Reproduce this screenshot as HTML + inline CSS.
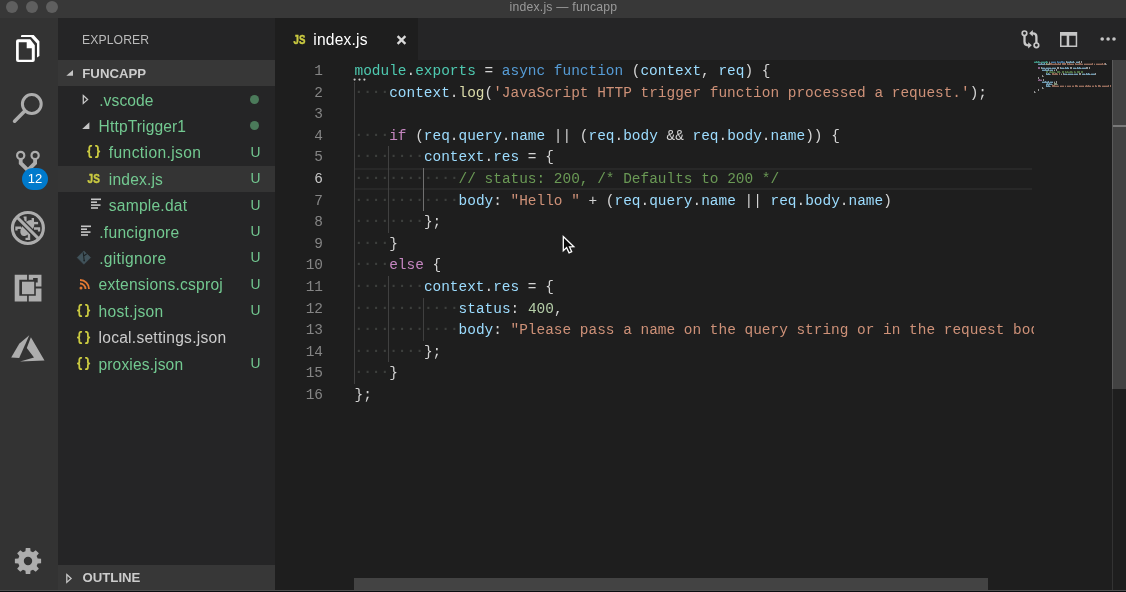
<!DOCTYPE html>
<html><head><meta charset="utf-8">
<style>
*{margin:0;padding:0;box-sizing:border-box}
html,body{width:1126px;height:592px;overflow:hidden;background:#1e1e1e;font-family:"Liberation Sans",sans-serif;-webkit-font-smoothing:antialiased}
.abs{position:absolute}
#title{position:absolute;left:0;top:0;width:1126px;height:18px;background:#383838}
.tl{position:absolute;top:1px;width:12px;height:12px;border-radius:50%;background:#5f5f5f}
#ttext{position:absolute;left:509.5px;top:0px;font-size:12.2px;letter-spacing:0.23px;color:#9a9a9a;white-space:nowrap}
#act{position:absolute;left:0;top:18px;width:58px;height:572px;background:#333333}
#side{position:absolute;left:58px;top:18px;width:217px;height:572px;background:#252526}
.row{position:absolute;left:58px;width:217px;height:26.4px;line-height:26.4px;font-size:15.6px;color:#73c991;white-space:nowrap}
.row .nm{position:absolute;top:0}
.row .dot{position:absolute;left:191.7px;top:7px;width:9.4px;height:9.4px;border-radius:50%;background:#4b7a5a}
.ic{font-family:"Liberation Sans",sans-serif;font-size:14px;font-weight:bold;color:#cbcb41;letter-spacing:-0.5px;line-height:14px}
.jsic{font-family:"Liberation Sans",sans-serif;font-size:11.5px;font-weight:bold;color:#cbcb41;line-height:11px;letter-spacing:0}
.row .u{position:absolute;left:192.4px;top:-0.5px;font-size:13.8px}
#tabs{position:absolute;left:275px;top:18px;width:851px;height:42px;background:#252526}
#tab{position:absolute;left:275px;top:18px;width:143px;height:42px;background:#1e1e1e}
.ln{position:absolute;left:354.5px;width:679px;overflow:hidden;height:21.6px;line-height:21.6px;font-family:"Liberation Mono",monospace;font-size:14.44px;white-space:pre;color:#d4d4d4}
.ln i{font-style:normal;color:#3d3f3d;position:relative;top:-1px;font-weight:bold}
.num{position:absolute;left:290px;width:33px;text-align:right;height:21.6px;line-height:21.6px;font-family:"Liberation Mono",monospace;font-size:14.44px;color:#858585}
.num.act{color:#c6c6c6}
.ig{position:absolute;width:1px;background:#404040}
.iga{background:#707070}
</style></head><body>
<div style="position:absolute;left:0;top:0;width:1126px;height:592px;will-change:transform">
<div id="title">
  <div class="tl" style="left:6px"></div>
  <div class="tl" style="left:26px"></div>
  <div class="tl" style="left:46px"></div>
  <div id="ttext">index.js — funcapp</div>
</div>
<div id="act"></div>
<svg class="abs" style="left:0;top:18px" width="58" height="572" viewBox="0 18 58 572">
 <!-- explorer (white) -->
 <path fill="#ffffff" fill-rule="evenodd" d="M18.1,39.3 H30.2 L34.8,45.2 V60 Q34.8,62 32.8,62 H18.1 Q16.05,62 16.05,60 V41.3 Q16.05,39.3 18.1,39.3 Z M18.75,42.3 V59.8 H31.8 V48.2 H26.7 V42.3 Z"/>
 <path fill="#ffffff" d="M22,35 H33.7 L39.4,41.2 V55.9 L37,57.6 V43.6 L31,37.1 H21 V36 Q21,35 22,35 Z"/>
 <!-- search -->
 <g fill="none" stroke="#adadad">
  <circle cx="31.8" cy="104" r="9.4" stroke-width="3"/>
  <path d="M24.5,111.3 L14.6,121.2" stroke-width="3.6" stroke-linecap="round"/>
 </g>
 <!-- source control -->
 <g fill="none" stroke="#adadad" stroke-width="2.2">
  <circle cx="20.7" cy="155.4" r="3.6"/>
  <circle cx="35.1" cy="155.4" r="3.6"/>
 </g>
 <path d="M18.8,158.6 V163.9 L27.9,173 L37,163.9 V158.6 H33.2 V162.3 L27.9,167.6 L22.6,162.3 V158.6 Z" fill="#adadad"/>
 <!-- debug -->
 <g fill="#adadad">
  <ellipse cx="27.3" cy="228" rx="9.2" ry="5.3" transform="rotate(-52 27.3 228)"/>
  <path d="M23.6,216.4 H26.6 V221.8 H24.2 V218.3 H23.6 Z"/>
  <rect x="31.6" y="218" width="2.4" height="4.6"/>
  <rect x="33.5" y="221.9" width="4.6" height="2.4"/>
  <path d="M34,227.3 H40.2 V231.6 H37.9 V229.7 H34 Z"/>
  <path d="M15.3,226.5 H21 V228.9 H17.6 V230.4 H15.3 Z"/>
  <path d="M27.8,233.5 H30.2 V239.9 H25.5 V237.7 H27.8 Z"/>
 </g>
 <path d="M15.5,215.6 L40.3,240.4" stroke="#333333" stroke-width="5.6"/>
 <g fill="none" stroke="#adadad">
  <circle cx="27.9" cy="228" r="15.5" stroke-width="3.1"/>
  <path d="M17,217.1 L38.8,238.9" stroke-width="2.9"/>
 </g>
 <!-- extensions -->
 <g fill="#adadad">
  <path d="M14.7,274.7 H27.1 V279.8 H19.3 V295.8 H27.1 V301.46 H14.7 Z"/>
  <path d="M28.75,274.7 H41.46 V286.6 H35.8 V282.5 H37.7 V278 H33.1 V279.8 H28.75 Z"/>
  <path d="M28.75,301.46 H41.46 V288.5 H35.8 V295.8 H28.75 Z"/>
  <rect x="22" y="281.7" width="12.2" height="12.5"/>
 </g>
 <!-- azure -->
 <g fill="#adadad">
  <polygon points="11.2,357.6 19.2,343.7 29.3,335.2 19.2,358.05"/>
  <polygon points="30.9,337.2 44.5,360.6 20.05,361.4 34,357.6 26.8,347.9"/>
 </g>
 <!-- gear -->
 <g transform="translate(28,561)" fill="#adadad">
  <path id="gear" fill-rule="evenodd" d="M9.66,-2.57 L13.11,-2.25 L13.11,2.25 L9.66,2.57 L8.65,5.02 L10.86,7.68 L7.68,10.86 L5.02,8.65 L2.57,9.66 L2.25,13.11 L-2.25,13.11 L-2.57,9.66 L-5.02,8.65 L-7.68,10.86 L-10.86,7.68 L-8.65,5.02 L-9.66,2.57 L-13.11,2.25 L-13.11,-2.25 L-9.66,-2.57 L-8.65,-5.02 L-10.86,-7.68 L-7.68,-10.86 L-5.02,-8.65 L-2.57,-9.66 L-2.25,-13.11 L2.25,-13.11 L2.57,-9.66 L5.02,-8.65 L7.68,-10.86 L10.86,-7.68 L8.65,-5.02 Z M4.2,0 A4.2,4.2 0 1 0 -4.2,0 A4.2,4.2 0 1 0 4.2,0 Z"/>
 </g>
</svg>
<div class="abs" style="left:22px;top:168px;width:26px;height:21.6px;border-radius:11px;background:#007acc;color:#fff;font-size:13px;line-height:21.6px;text-align:center">12</div>
<div id="side"></div>
<div class="abs" style="left:82px;top:32.5px;font-size:12.2px;color:#bbbbbb;letter-spacing:0.1px">EXPLORER</div>
<div class="abs" style="left:58px;top:60px;width:217px;height:26px;background:#373737"></div>
<div class="abs" style="left:82.3px;top:66px;font-size:13.2px;font-weight:bold;color:#cccccc">FUNCAPP</div>
<div class="abs" style="left:58px;top:165.6px;width:217px;height:26.4px;background:#343434"></div>
<div class="row" style="top:87.50px"><span class="nm" style="left:41.2px;letter-spacing:0.092px">.vscode</span><span class="dot"></span></div>
<div class="row" style="top:113.90px"><span class="nm" style="left:40.6px;letter-spacing:0.119px">HttpTrigger1</span><span class="dot"></span></div>
<div class="row" style="top:140.30px"><span class="nm" style="left:50.8px;letter-spacing:0.386px">function.json</span><span class="u">U</span></div>
<div class="row" style="top:166.70px"><span class="nm" style="left:50.8px;letter-spacing:0.175px">index.js</span><span class="u">U</span></div>
<div class="row" style="top:193.10px"><span class="nm" style="left:50.8px;letter-spacing:0.213px">sample.dat</span><span class="u">U</span></div>
<div class="row" style="top:219.50px"><span class="nm" style="left:41.2px;letter-spacing:0.294px">.funcignore</span><span class="u">U</span></div>
<div class="row" style="top:245.90px"><span class="nm" style="left:41.2px;letter-spacing:0.316px">.gitignore</span><span class="u">U</span></div>
<div class="row" style="top:272.30px"><span class="nm" style="left:40.5px;letter-spacing:0.238px">extensions.csproj</span><span class="u">U</span></div>
<div class="row" style="top:298.70px"><span class="nm" style="left:40.5px;letter-spacing:0.285px">host.json</span><span class="u">U</span></div>
<div class="row" style="top:325.10px;color:#cccccc"><span class="nm" style="left:40.5px;letter-spacing:0.250px">local.settings.json</span></div>
<div class="row" style="top:351.50px"><span class="nm" style="left:40.5px;letter-spacing:0.126px">proxies.json</span><span class="u">U</span></div>
<!-- file icons -->
<svg class="abs" style="left:87px;top:145px" width="14" height="14" viewBox="0 0 14 14"><g fill="none" stroke="#cbcb41" stroke-width="1.8" stroke-linecap="round" stroke-linejoin="round"><path d="M4.3,0.8 Q2.3,0.8 2.3,2.8 V5 Q2.3,6.5 0.9,6.5 Q2.3,6.5 2.3,8 V10.2 Q2.3,12.2 4.3,12.2"/><path d="M8.9,0.8 Q10.9,0.8 10.9,2.8 V5 Q10.9,6.5 12.3,6.5 Q10.9,6.5 10.9,8 V10.2 Q10.9,12.2 8.9,12.2"/></g></svg>
<svg class="abs" style="left:87px;top:172px" width="15" height="12"><text x="0.6" y="10.9" font-family="Liberation Sans" font-weight="bold" font-size="12.5" fill="#cbcb41" stroke="#cbcb41" stroke-width="0.45" textLength="12.2" lengthAdjust="spacingAndGlyphs">JS</text></svg>
<svg class="abs" style="left:91px;top:198px" width="11" height="12"><g fill="#c5c5c5"><rect x="0" y="0.5" width="10" height="1.6"/><rect x="0" y="3.4" width="6" height="1.6"/><rect x="0" y="6.3" width="9.5" height="1.6"/><rect x="0" y="9.2" width="7" height="1.6"/></g></svg>
<svg class="abs" style="left:81px;top:224.5px" width="11" height="12"><g fill="#c5c5c5"><rect x="0" y="0.5" width="10" height="1.6"/><rect x="0" y="3.4" width="6" height="1.6"/><rect x="0" y="6.3" width="9.5" height="1.6"/><rect x="0" y="9.2" width="7" height="1.6"/></g></svg>
<svg class="abs" style="left:76px;top:250px" width="16" height="16" viewBox="76 250 16 16"><polygon points="83.9,250.9 90.6,257.6 83.9,264.3 77.2,257.6" fill="#41535b" stroke="#41535b" stroke-width="0.6" stroke-linejoin="round"/><path d="M83.2,252.4 L84.2,260.5 M83.7,256 L86.8,253.8" stroke="#1e2426" stroke-width="1.1" fill="none"/><circle cx="84.2" cy="260.6" r="0.9" fill="#1e2426"/></svg>
<svg class="abs" style="left:78.5px;top:277.5px" width="12" height="12"><g fill="none" stroke="#e37933" stroke-width="1.8"><path d="M1,2 A9,9 0 0 1 10,11"/><path d="M1,5.5 A5.5,5.5 0 0 1 6.5,11"/></g><circle cx="2" cy="10" r="1.5" fill="#e37933"/></svg>
<svg class="abs" style="left:77.4px;top:304.2px" width="14" height="14" viewBox="0 0 14 14"><g fill="none" stroke="#cbcb41" stroke-width="1.8" stroke-linecap="round" stroke-linejoin="round"><path d="M4.3,0.8 Q2.3,0.8 2.3,2.8 V5 Q2.3,6.5 0.9,6.5 Q2.3,6.5 2.3,8 V10.2 Q2.3,12.2 4.3,12.2"/><path d="M8.9,0.8 Q10.9,0.8 10.9,2.8 V5 Q10.9,6.5 12.3,6.5 Q10.9,6.5 10.9,8 V10.2 Q10.9,12.2 8.9,12.2"/></g></svg>
<svg class="abs" style="left:77.4px;top:330.6px" width="14" height="14" viewBox="0 0 14 14"><g fill="none" stroke="#cbcb41" stroke-width="1.8" stroke-linecap="round" stroke-linejoin="round"><path d="M4.3,0.8 Q2.3,0.8 2.3,2.8 V5 Q2.3,6.5 0.9,6.5 Q2.3,6.5 2.3,8 V10.2 Q2.3,12.2 4.3,12.2"/><path d="M8.9,0.8 Q10.9,0.8 10.9,2.8 V5 Q10.9,6.5 12.3,6.5 Q10.9,6.5 10.9,8 V10.2 Q10.9,12.2 8.9,12.2"/></g></svg>
<svg class="abs" style="left:77.4px;top:357px" width="14" height="14" viewBox="0 0 14 14"><g fill="none" stroke="#cbcb41" stroke-width="1.8" stroke-linecap="round" stroke-linejoin="round"><path d="M4.3,0.8 Q2.3,0.8 2.3,2.8 V5 Q2.3,6.5 0.9,6.5 Q2.3,6.5 2.3,8 V10.2 Q2.3,12.2 4.3,12.2"/><path d="M8.9,0.8 Q10.9,0.8 10.9,2.8 V5 Q10.9,6.5 12.3,6.5 Q10.9,6.5 10.9,8 V10.2 Q10.9,12.2 8.9,12.2"/></g></svg>
<div class="abs" style="left:58px;top:565px;width:217px;height:25px;background:#373737"></div>
<svg class="abs" style="left:0;top:0" width="275" height="592">
 <polygon points="66.3,75.8 73,69.9 73,75.8" fill="#c5c5c5"/>
 <polygon points="83.3,95.6 87.6,99.5 83.3,103.4" fill="none" stroke="#c5c5c5" stroke-width="1.3"/>
 <polygon points="82.2,129 89.4,122.3 89.4,129" fill="#c5c5c5"/>
 <polygon points="66.8,574.6 71.1,578.5 66.8,582.4" fill="none" stroke="#c5c5c5" stroke-width="1.3"/>
</svg>
<div class="abs" style="left:82.5px;top:570.2px;font-size:13.2px;font-weight:bold;color:#cccccc">OUTLINE</div>
<div id="tabs"></div>
<div id="tab"></div>
<svg class="abs" style="left:292.5px;top:33px" width="15" height="12"><text x="0.6" y="10.9" font-family="Liberation Sans" font-weight="bold" font-size="12.5" fill="#cbcb41" stroke="#cbcb41" stroke-width="0.45" textLength="11.8" lengthAdjust="spacingAndGlyphs">JS</text></svg>
<div class="abs" style="left:313.3px;top:30.6px;font-size:15.6px;letter-spacing:0.2px;color:#ffffff;line-height:18px">index.js</div>
<svg class="abs" style="left:396px;top:35px" width="11" height="10"><path d="M1.6,1.1 L9.4,8.9 M9.4,1.1 L1.6,8.9" stroke="#dadada" stroke-width="2.3"/></svg>
<svg class="abs" style="left:1010px;top:24px" width="116" height="30" viewBox="1010 24 116 30">
 <g fill="none" stroke="#c8c8c8" stroke-width="1.7">
  <circle cx="1024.5" cy="33.3" r="2.3"/>
  <circle cx="1036.4" cy="45.3" r="2.3"/>
 </g>
 <g fill="none" stroke="#c8c8c8" stroke-width="2.3">
  <path d="M1024.5,35.6 V41.8 Q1024.5,45.3 1028,45.3 H1029.5"/>
  <path d="M1036.4,43 V36.8 Q1036.4,33.3 1032.9,33.3 H1031.5"/>
 </g>
 <g fill="#c8c8c8">
  <polygon points="1028.2,42.2 1031.8,45.3 1028.2,48.5"/>
  <polygon points="1032.8,30.1 1029.2,33.3 1032.8,36.5"/>
 </g>
 <path fill="#c5c5c5" fill-rule="evenodd" d="M1060,32 H1077.2 V46.9 H1060 Z M1061.5,35.8 V45.4 H1066.7 V35.8 Z M1069.2,35.8 V45.4 H1075.7 V35.8 Z"/>
 <g fill="#c5c5c5">
  <circle cx="1102.2" cy="39" r="1.8"/>
  <circle cx="1108.1" cy="39" r="1.8"/>
  <circle cx="1114" cy="39" r="1.8"/>
 </g>
</svg>
<!-- current line highlight -->
<div class="abs" style="left:354px;top:168px;width:678px;height:21.6px;border-top:2px solid #282828;border-bottom:2px solid #282828"></div>
<div class="ig" style="left:354.0px;top:81.60px;height:302.40px"></div>
<div class="ig" style="left:388.0px;top:146.40px;height:86.40px"></div>
<div class="ig iga" style="left:423.0px;top:168.00px;height:43.20px"></div>
<div class="ig" style="left:388.0px;top:276.00px;height:86.40px"></div>
<div class="ig" style="left:423.0px;top:297.60px;height:43.20px"></div>
<svg class="abs" style="left:352px;top:77px" width="16" height="5"><g fill="#c8c8c8"><circle cx="2.6" cy="2.6" r="1.1"/><circle cx="7.5" cy="2.6" r="1.1"/><circle cx="12.4" cy="2.6" r="1.1"/></g></svg>
<div class="ln" style="top:61.00px"><span style="color:#4ec9b0">module</span><span style="color:#d4d4d4">.</span><span style="color:#4ec9b0">exports</span><span style="color:#d4d4d4"> = </span><span style="color:#569cd6">async</span><span style="color:#d4d4d4"> </span><span style="color:#569cd6">function</span><span style="color:#d4d4d4"> (</span><span style="color:#9cdcfe">context</span><span style="color:#d4d4d4">, </span><span style="color:#9cdcfe">req</span><span style="color:#d4d4d4">) {</span></div>
<div class="num" style="top:61.00px">1</div>
<div class="ln" style="top:82.60px"><i>·</i><i>·</i><i>·</i><i>·</i><span style="color:#9cdcfe">context</span><span style="color:#d4d4d4">.</span><span style="color:#dcdcaa">log</span><span style="color:#d4d4d4">(</span><span style="color:#ce9178">&#x27;JavaScript HTTP trigger function processed a request.&#x27;</span><span style="color:#d4d4d4">);</span></div>
<div class="num" style="top:82.60px">2</div>
<div class="ln" style="top:104.20px"></div>
<div class="num" style="top:104.20px">3</div>
<div class="ln" style="top:125.80px"><i>·</i><i>·</i><i>·</i><i>·</i><span style="color:#c586c0">if</span><span style="color:#d4d4d4"> (</span><span style="color:#9cdcfe">req</span><span style="color:#d4d4d4">.</span><span style="color:#9cdcfe">query</span><span style="color:#d4d4d4">.</span><span style="color:#9cdcfe">name</span><span style="color:#d4d4d4"> || (</span><span style="color:#9cdcfe">req</span><span style="color:#d4d4d4">.</span><span style="color:#9cdcfe">body</span><span style="color:#d4d4d4"> &amp;&amp; </span><span style="color:#9cdcfe">req</span><span style="color:#d4d4d4">.</span><span style="color:#9cdcfe">body</span><span style="color:#d4d4d4">.</span><span style="color:#9cdcfe">name</span><span style="color:#d4d4d4">)) {</span></div>
<div class="num" style="top:125.80px">4</div>
<div class="ln" style="top:147.40px"><i>·</i><i>·</i><i>·</i><i>·</i><i>·</i><i>·</i><i>·</i><i>·</i><span style="color:#9cdcfe">context</span><span style="color:#d4d4d4">.</span><span style="color:#9cdcfe">res</span><span style="color:#d4d4d4"> = {</span></div>
<div class="num" style="top:147.40px">5</div>
<div class="ln" style="top:169.00px"><i>·</i><i>·</i><i>·</i><i>·</i><i>·</i><i>·</i><i>·</i><i>·</i><i>·</i><i>·</i><i>·</i><i>·</i><span style="color:#6a9955">// status: 200, /* Defaults to 200 */</span></div>
<div class="num act" style="top:169.00px">6</div>
<div class="ln" style="top:190.60px"><i>·</i><i>·</i><i>·</i><i>·</i><i>·</i><i>·</i><i>·</i><i>·</i><i>·</i><i>·</i><i>·</i><i>·</i><span style="color:#9cdcfe">body</span><span style="color:#d4d4d4">: </span><span style="color:#ce9178">&quot;Hello &quot;</span><span style="color:#d4d4d4"> + (</span><span style="color:#9cdcfe">req</span><span style="color:#d4d4d4">.</span><span style="color:#9cdcfe">query</span><span style="color:#d4d4d4">.</span><span style="color:#9cdcfe">name</span><span style="color:#d4d4d4"> || </span><span style="color:#9cdcfe">req</span><span style="color:#d4d4d4">.</span><span style="color:#9cdcfe">body</span><span style="color:#d4d4d4">.</span><span style="color:#9cdcfe">name</span><span style="color:#d4d4d4">)</span></div>
<div class="num" style="top:190.60px">7</div>
<div class="ln" style="top:212.20px"><i>·</i><i>·</i><i>·</i><i>·</i><i>·</i><i>·</i><i>·</i><i>·</i><span style="color:#d4d4d4">};</span></div>
<div class="num" style="top:212.20px">8</div>
<div class="ln" style="top:233.80px"><i>·</i><i>·</i><i>·</i><i>·</i><span style="color:#d4d4d4">}</span></div>
<div class="num" style="top:233.80px">9</div>
<div class="ln" style="top:255.40px"><i>·</i><i>·</i><i>·</i><i>·</i><span style="color:#c586c0">else</span><span style="color:#d4d4d4"> {</span></div>
<div class="num" style="top:255.40px">10</div>
<div class="ln" style="top:277.00px"><i>·</i><i>·</i><i>·</i><i>·</i><i>·</i><i>·</i><i>·</i><i>·</i><span style="color:#9cdcfe">context</span><span style="color:#d4d4d4">.</span><span style="color:#9cdcfe">res</span><span style="color:#d4d4d4"> = {</span></div>
<div class="num" style="top:277.00px">11</div>
<div class="ln" style="top:298.60px"><i>·</i><i>·</i><i>·</i><i>·</i><i>·</i><i>·</i><i>·</i><i>·</i><i>·</i><i>·</i><i>·</i><i>·</i><span style="color:#9cdcfe">status</span><span style="color:#d4d4d4">: </span><span style="color:#b5cea8">400</span><span style="color:#d4d4d4">,</span></div>
<div class="num" style="top:298.60px">12</div>
<div class="ln" style="top:320.20px"><i>·</i><i>·</i><i>·</i><i>·</i><i>·</i><i>·</i><i>·</i><i>·</i><i>·</i><i>·</i><i>·</i><i>·</i><span style="color:#9cdcfe">body</span><span style="color:#d4d4d4">: </span><span style="color:#ce9178">&quot;Please pass a name on the query string or in the request body&quot;</span></div>
<div class="num" style="top:320.20px">13</div>
<div class="ln" style="top:341.80px"><i>·</i><i>·</i><i>·</i><i>·</i><i>·</i><i>·</i><i>·</i><i>·</i><span style="color:#d4d4d4">};</span></div>
<div class="num" style="top:341.80px">14</div>
<div class="ln" style="top:363.40px"><i>·</i><i>·</i><i>·</i><i>·</i><span style="color:#d4d4d4">}</span></div>
<div class="num" style="top:363.40px">15</div>
<div class="ln" style="top:385.00px"><span style="color:#d4d4d4">};</span></div>
<div class="num" style="top:385.00px">16</div>
<svg class="abs" style="left:0;top:0" width="1126" height="100">
<path fill="#4ec9b0" fill-opacity="0.25" d="M1034,61h1v1h-1zM1035,61h1v1h-1zM1037,61h1v1h-1zM1039,61h1v1h-1zM1041,61h1v1h-1zM1042,61h1v1h-1zM1043,61h1v1h-1zM1044,61h1v1h-1zM1045,61h1v1h-1zM1047,61h1v1h-1z"/>
<path fill="#4ec9b0" fill-opacity="0.65" d="M1034,62h1v1h-1zM1035,62h1v1h-1zM1036,61h1v2h-1zM1037,62h1v1h-1zM1038,61h1v2h-1zM1039,62h1v1h-1zM1041,62h1v1h-1zM1042,62h1v1h-1zM1044,62h1v1h-1zM1045,62h1v1h-1zM1046,61h1v2h-1zM1047,62h1v1h-1z"/>
<path fill="#d4d4d4" fill-opacity="0.4" d="M1040,62h1v1h-1zM1074,62h1v1h-1zM1045,64h1v1h-1zM1106,64h1v1h-1zM1045,68h1v1h-1zM1051,68h1v1h-1zM1064,68h1v1h-1zM1076,68h1v1h-1zM1081,68h1v1h-1zM1049,70h1v1h-1zM1050,74h1v1h-1zM1067,74h1v1h-1zM1073,74h1v1h-1zM1085,74h1v1h-1zM1090,74h1v1h-1zM1043,76h1v1h-1zM1049,82h1v1h-1zM1052,84h1v1h-1zM1057,84h1v1h-1zM1050,86h1v1h-1zM1043,88h1v1h-1zM1035,92h1v1h-1z"/>
<path fill="#4ec9b0" fill-opacity="0.7" d="M1043,62h1v1h-1z"/>
<path fill="#d4d4d4" fill-opacity="0.25" d="M1049,61h1v1h-1zM1054,69h1v1h-1zM1061,73h1v1h-1zM1054,81h1v1h-1z"/>
<path fill="#d4d4d4" fill-opacity="0.65" d="M1049,62h1v1h-1zM1066,61h1v2h-1zM1079,61h1v2h-1zM1081,61h1v2h-1zM1049,63h1v2h-1zM1105,63h1v2h-1zM1041,67h1v2h-1zM1057,67h1v2h-1zM1058,67h1v2h-1zM1060,67h1v2h-1zM1070,67h1v2h-1zM1071,67h1v2h-1zM1086,67h1v2h-1zM1087,67h1v2h-1zM1089,67h1v2h-1zM1054,70h1v1h-1zM1056,69h1v2h-1zM1061,74h1v1h-1zM1063,73h1v2h-1zM1079,73h1v2h-1zM1080,73h1v2h-1zM1095,73h1v2h-1zM1042,75h1v2h-1zM1038,77h1v2h-1zM1043,79h1v2h-1zM1054,82h1v1h-1zM1056,81h1v2h-1zM1042,87h1v2h-1zM1038,89h1v2h-1zM1034,91h1v2h-1z"/>
<path fill="#569cd6" fill-opacity="0.25" d="M1051,61h1v1h-1zM1052,61h1v1h-1zM1053,61h1v1h-1zM1054,61h1v1h-1zM1055,61h1v1h-1zM1058,61h1v1h-1zM1059,61h1v1h-1zM1060,61h1v1h-1zM1063,61h1v1h-1zM1064,61h1v1h-1z"/>
<path fill="#569cd6" fill-opacity="0.65" d="M1051,62h1v1h-1zM1052,62h1v1h-1zM1054,62h1v1h-1zM1055,62h1v1h-1zM1057,61h1v2h-1zM1058,62h1v1h-1zM1059,62h1v1h-1zM1060,62h1v1h-1zM1061,61h1v2h-1zM1062,61h1v2h-1zM1063,62h1v1h-1zM1064,62h1v1h-1z"/>
<path fill="#569cd6" fill-opacity="0.7" d="M1053,62h1v1h-1z"/>
<path fill="#9cdcfe" fill-opacity="0.25" d="M1067,61h1v1h-1zM1068,61h1v1h-1zM1069,61h1v1h-1zM1071,61h1v1h-1zM1072,61h1v1h-1zM1076,61h1v1h-1zM1077,61h1v1h-1zM1078,61h1v1h-1zM1038,63h1v1h-1zM1039,63h1v1h-1zM1040,63h1v1h-1zM1042,63h1v1h-1zM1043,63h1v1h-1zM1042,67h1v1h-1zM1043,67h1v1h-1zM1044,67h1v1h-1zM1046,67h1v1h-1zM1047,67h1v1h-1zM1048,67h1v1h-1zM1049,67h1v1h-1zM1050,67h1v1h-1zM1052,67h1v1h-1zM1053,67h1v1h-1zM1054,67h1v1h-1zM1055,67h1v1h-1zM1061,67h1v1h-1zM1062,67h1v1h-1zM1063,67h1v1h-1zM1066,67h1v1h-1zM1068,67h1v1h-1zM1073,67h1v1h-1zM1074,67h1v1h-1zM1075,67h1v1h-1zM1078,67h1v1h-1zM1080,67h1v1h-1zM1082,67h1v1h-1zM1083,67h1v1h-1zM1084,67h1v1h-1zM1085,67h1v1h-1zM1042,69h1v1h-1zM1043,69h1v1h-1zM1044,69h1v1h-1zM1046,69h1v1h-1zM1047,69h1v1h-1zM1050,69h1v1h-1zM1051,69h1v1h-1zM1052,69h1v1h-1zM1047,73h1v1h-1zM1049,73h1v1h-1zM1064,73h1v1h-1zM1065,73h1v1h-1zM1066,73h1v1h-1zM1068,73h1v1h-1zM1069,73h1v1h-1zM1070,73h1v1h-1zM1071,73h1v1h-1zM1072,73h1v1h-1zM1074,73h1v1h-1zM1075,73h1v1h-1zM1076,73h1v1h-1zM1077,73h1v1h-1zM1082,73h1v1h-1zM1083,73h1v1h-1zM1084,73h1v1h-1zM1087,73h1v1h-1zM1089,73h1v1h-1zM1091,73h1v1h-1zM1092,73h1v1h-1zM1093,73h1v1h-1zM1094,73h1v1h-1zM1042,81h1v1h-1zM1043,81h1v1h-1zM1044,81h1v1h-1zM1046,81h1v1h-1zM1047,81h1v1h-1zM1050,81h1v1h-1zM1051,81h1v1h-1zM1052,81h1v1h-1zM1046,83h1v1h-1zM1048,83h1v1h-1zM1050,83h1v1h-1zM1051,83h1v1h-1zM1047,85h1v1h-1zM1049,85h1v1h-1z"/>
<path fill="#9cdcfe" fill-opacity="0.65" d="M1067,62h1v1h-1zM1068,62h1v1h-1zM1069,62h1v1h-1zM1070,61h1v2h-1zM1071,62h1v1h-1zM1072,62h1v1h-1zM1073,61h1v2h-1zM1076,62h1v1h-1zM1077,62h1v1h-1zM1038,64h1v1h-1zM1039,64h1v1h-1zM1040,64h1v1h-1zM1041,63h1v2h-1zM1042,64h1v1h-1zM1043,64h1v1h-1zM1044,63h1v2h-1zM1042,68h1v1h-1zM1043,68h1v1h-1zM1047,68h1v1h-1zM1048,68h1v1h-1zM1049,68h1v1h-1zM1052,68h1v1h-1zM1053,68h1v1h-1zM1054,68h1v1h-1zM1055,68h1v1h-1zM1061,68h1v1h-1zM1062,68h1v1h-1zM1065,67h1v2h-1zM1066,68h1v1h-1zM1067,67h1v2h-1zM1073,68h1v1h-1zM1074,68h1v1h-1zM1077,67h1v2h-1zM1078,68h1v1h-1zM1079,67h1v2h-1zM1082,68h1v1h-1zM1083,68h1v1h-1zM1084,68h1v1h-1zM1085,68h1v1h-1zM1042,70h1v1h-1zM1043,70h1v1h-1zM1044,70h1v1h-1zM1045,69h1v2h-1zM1046,70h1v1h-1zM1047,70h1v1h-1zM1048,69h1v2h-1zM1050,70h1v1h-1zM1051,70h1v1h-1zM1052,70h1v1h-1zM1046,73h1v2h-1zM1047,74h1v1h-1zM1048,73h1v2h-1zM1064,74h1v1h-1zM1065,74h1v1h-1zM1069,74h1v1h-1zM1070,74h1v1h-1zM1071,74h1v1h-1zM1074,74h1v1h-1zM1075,74h1v1h-1zM1076,74h1v1h-1zM1077,74h1v1h-1zM1082,74h1v1h-1zM1083,74h1v1h-1zM1086,73h1v2h-1zM1087,74h1v1h-1zM1088,73h1v2h-1zM1091,74h1v1h-1zM1092,74h1v1h-1zM1093,74h1v1h-1zM1094,74h1v1h-1zM1042,82h1v1h-1zM1043,82h1v1h-1zM1044,82h1v1h-1zM1045,81h1v2h-1zM1046,82h1v1h-1zM1047,82h1v1h-1zM1048,81h1v2h-1zM1050,82h1v1h-1zM1051,82h1v1h-1zM1052,82h1v1h-1zM1046,84h1v1h-1zM1047,83h1v2h-1zM1048,84h1v1h-1zM1049,83h1v2h-1zM1050,84h1v1h-1zM1051,84h1v1h-1zM1046,85h1v2h-1zM1047,86h1v1h-1zM1048,85h1v2h-1z"/>
<path fill="#9cdcfe" fill-opacity="0.7" d="M1078,62h1v1h-1zM1044,68h1v1h-1zM1046,68h1v1h-1zM1050,68h1v1h-1zM1063,68h1v1h-1zM1068,68h1v1h-1zM1075,68h1v1h-1zM1080,68h1v1h-1zM1049,74h1v1h-1zM1066,74h1v1h-1zM1068,74h1v1h-1zM1072,74h1v1h-1zM1084,74h1v1h-1zM1089,74h1v1h-1zM1049,86h1v1h-1z"/>
<path fill="#dcdcaa" fill-opacity="0.65" d="M1046,63h1v2h-1zM1047,64h1v1h-1z"/>
<path fill="#dcdcaa" fill-opacity="0.25" d="M1047,63h1v1h-1zM1048,63h1v1h-1z"/>
<path fill="#dcdcaa" fill-opacity="0.7" d="M1048,64h1v1h-1z"/>
<path fill="#ce9178" fill-opacity="0.65" d="M1050,63h1v2h-1zM1051,63h1v2h-1zM1052,64h1v1h-1zM1053,64h1v1h-1zM1054,64h1v1h-1zM1055,63h1v2h-1zM1056,64h1v1h-1zM1057,64h1v1h-1zM1058,63h1v2h-1zM1060,63h1v2h-1zM1062,63h1v2h-1zM1063,63h1v2h-1zM1064,63h1v2h-1zM1065,63h1v2h-1zM1067,63h1v2h-1zM1068,64h1v1h-1zM1069,63h1v2h-1zM1072,64h1v1h-1zM1073,64h1v1h-1zM1075,63h1v2h-1zM1076,64h1v1h-1zM1077,64h1v1h-1zM1078,64h1v1h-1zM1079,63h1v2h-1zM1080,63h1v2h-1zM1081,64h1v1h-1zM1082,64h1v1h-1zM1085,64h1v1h-1zM1086,64h1v1h-1zM1087,64h1v1h-1zM1088,64h1v1h-1zM1089,64h1v1h-1zM1090,64h1v1h-1zM1091,64h1v1h-1zM1092,63h1v2h-1zM1094,64h1v1h-1zM1096,64h1v1h-1zM1097,64h1v1h-1zM1099,64h1v1h-1zM1100,64h1v1h-1zM1101,64h1v1h-1zM1102,63h1v2h-1zM1104,63h1v2h-1zM1052,73h1v2h-1zM1053,73h1v2h-1zM1054,74h1v1h-1zM1055,73h1v2h-1zM1056,73h1v2h-1zM1057,74h1v1h-1zM1059,73h1v2h-1zM1052,85h1v2h-1zM1053,85h1v2h-1zM1054,85h1v2h-1zM1055,86h1v1h-1zM1056,86h1v1h-1zM1057,86h1v1h-1zM1058,86h1v1h-1zM1061,86h1v1h-1zM1062,86h1v1h-1zM1063,86h1v1h-1zM1065,86h1v1h-1zM1067,86h1v1h-1zM1068,86h1v1h-1zM1069,86h1v1h-1zM1070,86h1v1h-1zM1072,86h1v1h-1zM1073,86h1v1h-1zM1075,85h1v2h-1zM1076,85h1v2h-1zM1077,86h1v1h-1zM1080,86h1v1h-1zM1081,86h1v1h-1zM1082,86h1v1h-1zM1085,86h1v1h-1zM1086,85h1v2h-1zM1087,86h1v1h-1zM1088,85h1v2h-1zM1089,86h1v1h-1zM1092,86h1v1h-1zM1093,86h1v1h-1zM1095,85h1v2h-1zM1096,86h1v1h-1zM1098,85h1v2h-1zM1099,85h1v2h-1zM1100,86h1v1h-1zM1102,86h1v1h-1zM1103,86h1v1h-1zM1105,86h1v1h-1zM1106,86h1v1h-1zM1107,86h1v1h-1zM1108,85h1v2h-1zM1110,85h1v2h-1z"/>
<path fill="#ce9178" fill-opacity="0.25" d="M1052,63h1v1h-1zM1053,63h1v1h-1zM1054,63h1v1h-1zM1056,63h1v1h-1zM1057,63h1v1h-1zM1059,63h1v1h-1zM1068,63h1v1h-1zM1070,63h1v1h-1zM1071,63h1v1h-1zM1072,63h1v1h-1zM1073,63h1v1h-1zM1076,63h1v1h-1zM1077,63h1v1h-1zM1078,63h1v1h-1zM1081,63h1v1h-1zM1082,63h1v1h-1zM1084,63h1v1h-1zM1085,63h1v1h-1zM1086,63h1v1h-1zM1087,63h1v1h-1zM1088,63h1v1h-1zM1089,63h1v1h-1zM1090,63h1v1h-1zM1091,63h1v1h-1zM1094,63h1v1h-1zM1096,63h1v1h-1zM1097,63h1v1h-1zM1098,63h1v1h-1zM1099,63h1v1h-1zM1100,63h1v1h-1zM1101,63h1v1h-1zM1054,73h1v1h-1zM1057,73h1v1h-1zM1055,85h1v1h-1zM1056,85h1v1h-1zM1057,85h1v1h-1zM1058,85h1v1h-1zM1060,85h1v1h-1zM1061,85h1v1h-1zM1062,85h1v1h-1zM1063,85h1v1h-1zM1065,85h1v1h-1zM1067,85h1v1h-1zM1068,85h1v1h-1zM1069,85h1v1h-1zM1070,85h1v1h-1zM1072,85h1v1h-1zM1073,85h1v1h-1zM1077,85h1v1h-1zM1079,85h1v1h-1zM1080,85h1v1h-1zM1081,85h1v1h-1zM1082,85h1v1h-1zM1083,85h1v1h-1zM1085,85h1v1h-1zM1087,85h1v1h-1zM1089,85h1v1h-1zM1090,85h1v1h-1zM1092,85h1v1h-1zM1093,85h1v1h-1zM1096,85h1v1h-1zM1100,85h1v1h-1zM1102,85h1v1h-1zM1103,85h1v1h-1zM1104,85h1v1h-1zM1105,85h1v1h-1zM1106,85h1v1h-1zM1107,85h1v1h-1z"/>
<path fill="#ce9178" fill-opacity="0.7" d="M1059,64h1v1h-1zM1070,64h1v1h-1zM1071,64h1v1h-1zM1084,64h1v1h-1zM1098,64h1v1h-1zM1060,86h1v1h-1zM1079,86h1v1h-1zM1083,86h1v1h-1zM1090,86h1v1h-1zM1104,86h1v1h-1z"/>
<path fill="#ce9178" fill-opacity="0.4" d="M1103,64h1v1h-1z"/>
<path fill="#c586c0" fill-opacity="0.65" d="M1038,67h1v2h-1zM1039,67h1v2h-1zM1038,80h1v1h-1zM1039,79h1v2h-1zM1040,80h1v1h-1zM1041,80h1v1h-1z"/>
<path fill="#6a9955" fill-opacity="0.65" d="M1046,71h1v2h-1zM1047,71h1v2h-1zM1049,72h1v1h-1zM1050,71h1v2h-1zM1051,72h1v1h-1zM1052,71h1v2h-1zM1053,72h1v1h-1zM1054,72h1v1h-1zM1057,71h1v2h-1zM1058,71h1v2h-1zM1059,71h1v2h-1zM1062,71h1v2h-1zM1063,71h1v2h-1zM1065,71h1v2h-1zM1066,72h1v1h-1zM1067,71h1v2h-1zM1068,72h1v1h-1zM1069,72h1v1h-1zM1070,71h1v2h-1zM1071,71h1v2h-1zM1072,72h1v1h-1zM1074,71h1v2h-1zM1075,72h1v1h-1zM1077,71h1v2h-1zM1078,71h1v2h-1zM1079,71h1v2h-1zM1081,71h1v2h-1zM1082,71h1v2h-1z"/>
<path fill="#6a9955" fill-opacity="0.25" d="M1049,71h1v1h-1zM1051,71h1v1h-1zM1053,71h1v1h-1zM1054,71h1v1h-1zM1066,71h1v1h-1zM1068,71h1v1h-1zM1069,71h1v1h-1zM1072,71h1v1h-1zM1075,71h1v1h-1z"/>
<path fill="#6a9955" fill-opacity="0.4" d="M1055,72h1v1h-1zM1060,72h1v1h-1z"/>
<path fill="#c586c0" fill-opacity="0.25" d="M1038,79h1v1h-1zM1040,79h1v1h-1zM1041,79h1v1h-1z"/>
<path fill="#b5cea8" fill-opacity="0.65" d="M1054,83h1v2h-1zM1055,83h1v2h-1zM1056,83h1v2h-1z"/>
</svg>
<!-- mouse cursor -->
<svg class="abs" style="left:555px;top:230px" width="30" height="30" viewBox="555 230 30 30"><path d="M563.3,236.5 V250.8 L566.6,247.6 L569.1,252.8 L571.7,251.7 L569.5,246.9 L573.8,246.7 Z" fill="#0b0b0b" stroke="#ffffff" stroke-width="1.3" stroke-linejoin="miter"/></svg>
<!-- vertical scrollbar -->
<div class="abs" style="left:1112px;top:60px;width:1px;height:530px;background:#333333"></div>
<div class="abs" style="left:1113px;top:125px;width:13px;height:2.2px;background:#7a7a7a"></div>
<div class="abs" style="left:1112px;top:60px;width:14px;height:329px;background:rgba(121,121,121,0.4)"></div>
<div class="abs" style="left:1112px;top:60px;width:1px;height:329px;background:rgba(255,255,255,0.07)"></div>
<!-- horizontal scrollbar -->
<div class="abs" style="left:354px;top:578px;width:634px;height:12px;background:#434343"></div>
<!-- bottom strip -->
<div class="abs" style="left:0;top:590px;width:1126px;height:1px;background:#4f4f4f"></div>
<div class="abs" style="left:0;top:591px;width:1126px;height:1px;background:#0b0d10"></div>
</div>
</body></html>
